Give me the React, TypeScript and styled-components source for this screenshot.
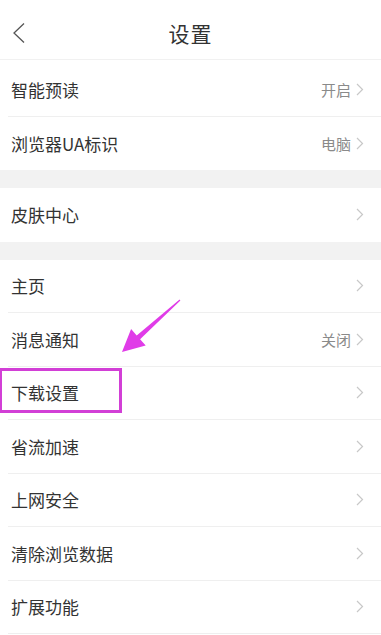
import React from 'react';
import styled, { createGlobalStyle } from 'styled-components';

const GlobalStyle = createGlobalStyle`
  html, body {
    margin: 0;
    padding: 0;
    background: #ffffff;
  }
  body {
    font-family: "Noto Sans CJK SC", "Noto Sans", sans-serif;
    -webkit-font-smoothing: antialiased;
  }
`;

const Page = styled.div`
  position: relative;
  width: 381px;
  min-height: 635px;
  background: #ffffff;
  overflow: hidden;
`;

const Header = styled.header`
  display: grid;
  grid-template-columns: 60px 1fr 60px;
  align-items: center;
  height: 59px;
  box-sizing: content-box;
  padding-top: 0;
  border-bottom: 1px solid #f1f1f1;
`;

const HeaderInner = styled.div`
  display: contents;
`;

const BackButton = styled.button`
  display: flex;
  align-items: center;
  justify-content: flex-start;
  padding: 7px 0 0 12px;
  height: 100%;
  border: none;
  background: none;
  cursor: pointer;
`;

const Title = styled.h1`
  margin: 0;
  padding-top: 6px;
  text-align: center;
  font-size: 21px;
  font-weight: 400;
  color: #333333;
  letter-spacing: 1px;
`;

const List = styled.div`
  display: flex;
  flex-direction: column;
  padding-top: 3px;
`;

const Group = styled.section`
  display: flex;
  flex-direction: column;
`;

const Gap = styled.div`
  height: 18px;
  background: #f2f2f2;
`;

const Row = styled.div<{ last?: boolean }>`
  display: flex;
  align-items: center;
  justify-content: space-between;
  height: 53.5px;
  box-sizing: border-box;
  margin-left: 8px;
  padding: 0 17px 0 3px;
  border-bottom: ${p => (p.last ? 'none' : '1px solid #efefef')};
`;

const Label = styled.span`
  font-size: 17px;
  color: #333333;
`;

const Right = styled.div`
  display: flex;
  align-items: center;
  gap: 5px;
`;

const Value = styled.span`
  font-size: 15px;
  color: #8a8a8a;
`;

const Highlight = styled.div`
  position: absolute;
  left: -1px;
  top: 368px;
  width: 123px;
  height: 45px;
  box-sizing: border-box;
  border: 3px solid #d23fd6;
  pointer-events: none;
`;

const Arrow = styled.svg`
  position: absolute;
  left: 110px;
  top: 290px;
  pointer-events: none;
`;

const Chevron = () => (
  <svg width="8" height="13" viewBox="0 0 8 13">
    <path d="M1 1l5.5 5.5L1 12" fill="none" stroke="#c8c8c8" strokeWidth="1.2" />
  </svg>
);

interface Item {
  label: string;
  value?: string;
}

const groups: Item[][] = [
  [{ label: '智能预读', value: '开启' }, { label: '浏览器UA标识', value: '电脑' }],
  [{ label: '皮肤中心' }],
  [
    { label: '主页' },
    { label: '消息通知', value: '关闭' },
    { label: '下载设置' },
    { label: '省流加速' },
    { label: '上网安全' },
    { label: '清除浏览数据' },
    { label: '扩展功能' },
  ],
];

export default function App() {
  return (
    <Page>
      <GlobalStyle />
      <Header>
        <HeaderInner>
          <BackButton aria-label="返回">
            <svg width="14" height="22" viewBox="0 0 14 22">
              <path d="M12 1.5L2 11l10 9.5" fill="none" stroke="#555" strokeWidth="1.3" />
            </svg>
          </BackButton>
          <Title>设置</Title>
          <span />
        </HeaderInner>
      </Header>
      <List>
        {groups.map((group, gi) => (
          <React.Fragment key={gi}>
            {gi > 0 && <Gap />}
            <Group>
              {group.map((item, i) => (
                <Row key={item.label} last={gi < groups.length - 1 && i === group.length - 1}>
                  <Label>{item.label}</Label>
                  <Right>
                    {item.value && <Value>{item.value}</Value>}
                    <Chevron />
                  </Right>
                </Row>
              ))}
            </Group>
          </React.Fragment>
        ))}
      </List>

      <Arrow width="80" height="70" viewBox="0 0 80 70">
        <polygon
          points="70.4,10.4 30.1,49.2 35.7,55.5 12,62 21.1,39.1 26.7,45.4 69.6,9.6"
          fill="#e03ce8"
        />
      </Arrow>
      <Highlight />
    </Page>
  );
}
